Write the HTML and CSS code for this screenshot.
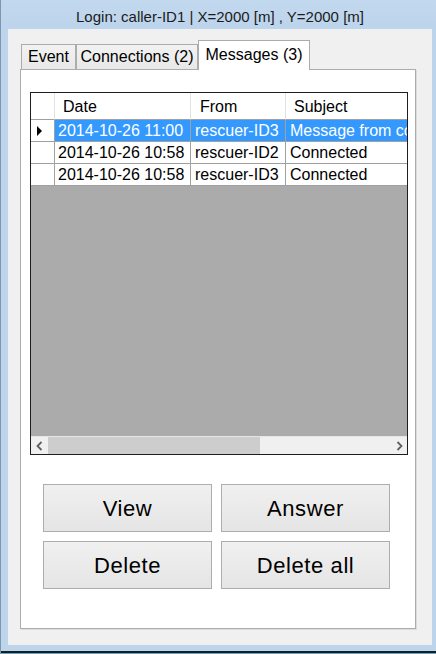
FILE: index.html
```html
<!DOCTYPE html>
<html>
<head>
<meta charset="utf-8">
<link rel="stylesheet" href="styles.css">
</head>
<body>
<div class="window">
  <div class="titlebar">Login: caller-ID1 | X=2000 [m] , Y=2000 [m]</div>
  <div class="client">
    <div class="tabstrip">
      <div class="tab tab-event">Event</div>
      <div class="tab tab-conn">Connections (2)</div>
      <div class="tab tab-msg active">Messages (3)</div>
    </div>
    <div class="panel">
      <div class="grid">
        <div class="row head">
          <div class="cell rh"></div>
          <div class="cell c1">Date</div>
          <div class="cell c2">From</div>
          <div class="cell c3">Subject</div>
        </div>
        <div class="row selected">
          <div class="cell rh"><svg width="6" height="10" viewBox="0 0 6 10"><path d="M0 0 L5 5 L0 10 Z" fill="#000"/></svg></div>
          <div class="cell c1">2014-10-26 11:00</div>
          <div class="cell c2">rescuer-ID3</div>
          <div class="cell c3">Message from coordinator</div>
        </div>
        <div class="row">
          <div class="cell rh"></div>
          <div class="cell c1">2014-10-26 10:58</div>
          <div class="cell c2">rescuer-ID2</div>
          <div class="cell c3">Connected</div>
        </div>
        <div class="row">
          <div class="cell rh"></div>
          <div class="cell c1">2014-10-26 10:58</div>
          <div class="cell c2">rescuer-ID3</div>
          <div class="cell c3">Connected</div>
        </div>
        <div class="empty"></div>
        <div class="hscroll">
          <div class="sbtn"><svg width="8" height="10" viewBox="0 0 8 10"><path d="M5.5 1 L1.5 5 L5.5 9" fill="none" stroke="#606060" stroke-width="1.8"/></svg></div>
          <div class="thumb"></div>
          <div class="track"></div>
          <div class="sbtn"><svg width="8" height="10" viewBox="0 0 8 10"><path d="M2.5 1 L6.5 5 L2.5 9" fill="none" stroke="#606060" stroke-width="1.8"/></svg></div>
        </div>
      </div>
      <div class="buttons">
        <div class="btn">View</div>
        <div class="btn">Answer</div>
        <div class="btn">Delete</div>
        <div class="btn">Delete all</div>
      </div>
    </div>
  </div>
  <div class="frame-bottom"></div>
</div>
</body>
</html>
```

FILE: styles.css
```css
html, body {
  margin: 0;
  padding: 0;
}
body {
  width: 436px;
  height: 654px;
  overflow: hidden;
  background: #bcd4ec;
  font-family: "Liberation Sans", Arial, sans-serif;
  color: #000;
}
.window {
  display: flex;
  flex-direction: column;
  height: 654px;
  border-left: 1px solid #7f96ad;
  box-sizing: border-box;
}
.titlebar {
  height: 29px;
  box-sizing: border-box;
  padding: 4px 0 0 3px;
  display: flex;
  align-items: center;
  justify-content: center;
  font-size: 15px;
  color: #1b1b1b;
  background: linear-gradient(#c2d8ee, #bcd4ec);
}
.client {
  margin: 0 4px 0 7px;
  height: 616px;
  box-sizing: border-box;
  background: #f0f0f0;
  padding: 11px 0 0 12px;
}
.tabstrip {
  display: flex;
  align-items: flex-end;
  height: 29px;
  padding-left: 1px;
  position: relative;
  z-index: 1;
}
.tab {
  height: 25px;
  box-sizing: border-box;
  border: 1px solid #acacac;
  border-bottom: none;
  background: linear-gradient(#f2f2f2, #e8e8e8);
  font-size: 16px;
  display: flex;
  align-items: center;
  justify-content: center;
}
.tab-event { width: 55px; }
.tab-conn { width: 122px; }
.tab-msg { width: 112px; }
.tab.active {
  height: 30px;
  margin-bottom: -1px;
  background: #fff;
  padding-bottom: 2px;
}
.panel {
  width: 396px;
  height: 560px;
  box-sizing: border-box;
  border: 1px solid #acacac;
  background: #fff;
  padding: 22px 0 0 9px;
  box-shadow: 1px 1px 0 #dcdcdc;
}
.grid {
  width: 378px;
  height: 363px;
  box-sizing: border-box;
  border: 1px solid #1e1e1e;
  background: #ababab;
  display: flex;
  flex-direction: column;
  overflow: hidden;
}
.row {
  display: flex;
  height: 22px;
  flex: none;
  background: #fff;
  font-size: 16px;
}
.row.head {
  height: 27px;
}
.cell {
  box-sizing: border-box;
  height: 100%;
  border-right: 1px solid #a0a0a0;
  border-bottom: 1px solid #a0a0a0;
  white-space: nowrap;
  overflow: hidden;
  display: flex;
  align-items: center;
  flex: none;
}
.rh { width: 24px; justify-content: center; padding-left: 0; }
.c1 { width: 136px; padding-left: 3px; }
.c2 { width: 95px; padding-left: 4px; }
.c3 { width: 220px; padding-left: 4px; }
.head .cell {
  border-right-color: #e3e3e3;
  border-bottom-color: #a0a0a0;
  padding-top: 1px;
}
.head .c1 { padding-left: 8px; }
.head .c2 { padding-left: 9px; }
.head .c3 { padding-left: 8px; }
.rh svg { margin-left: -6px; }
.selected .c1, .selected .c2, .selected .c3 {
  background: #3399ff;
  color: #fff;
}
.empty {
  flex: 1;
}
.hscroll {
  height: 17px;
  flex: none;
  display: flex;
  background: #f0f0f0;
  border-top: 1px solid #e6e6e6;
}
.sbtn {
  width: 17px;
  display: flex;
  align-items: center;
  justify-content: center;
}
.thumb {
  width: 212px;
  background: #cdcdcd;
}
.track {
  flex: 1;
}
.buttons {
  display: grid;
  grid-template-columns: 169px 169px;
  grid-auto-rows: 48px;
  gap: 9px;
  margin: 29px 0 0 13px;
}
.btn {
  box-sizing: border-box;
  border: 1px solid #adadad;
  background: linear-gradient(#f0f0f0, #e5e5e5);
  display: flex;
  align-items: center;
  justify-content: center;
  font-size: 22px;
  letter-spacing: 0.6px;
  padding-top: 1px;
}
.frame-bottom {
  margin-top: 6px;
  height: 3px;
  border-top: 2px solid #1c1c1c;
  background: #5aa9cc;
  box-sizing: border-box;
}
```
